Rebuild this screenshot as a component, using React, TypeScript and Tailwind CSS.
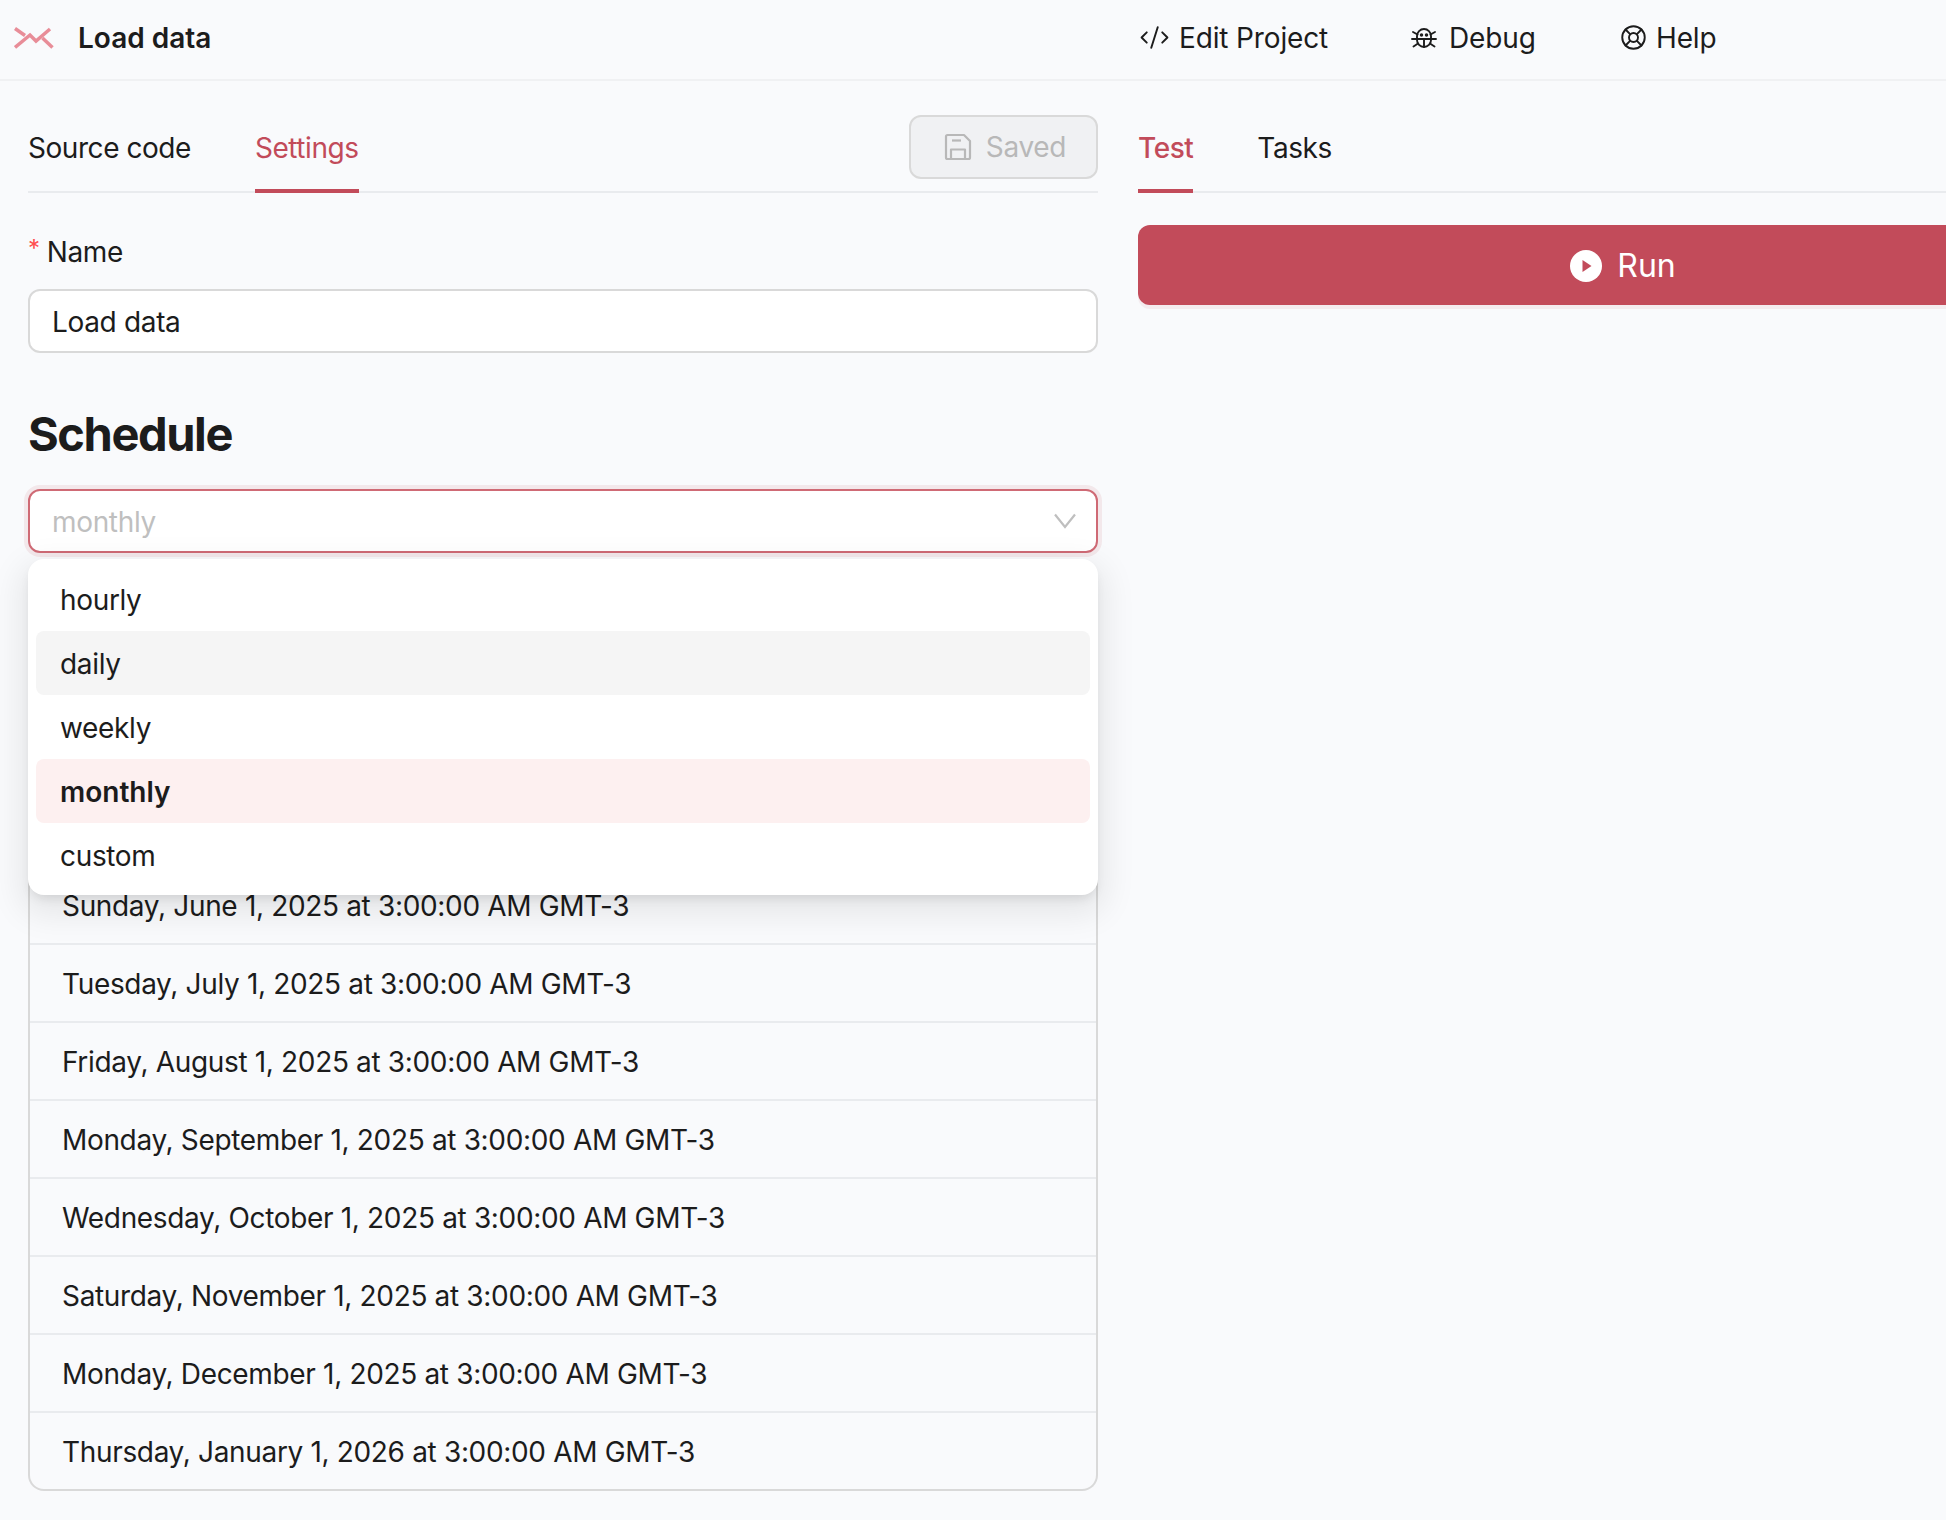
import { CodeXml, LifeBuoy } from "lucide-react"

const dates = [
  "Sunday, June 1, 2025 at 3:00:00 AM GMT-3",
  "Tuesday, July 1, 2025 at 3:00:00 AM GMT-3",
  "Friday, August 1, 2025 at 3:00:00 AM GMT-3",
  "Monday, September 1, 2025 at 3:00:00 AM GMT-3",
  "Wednesday, October 1, 2025 at 3:00:00 AM GMT-3",
  "Saturday, November 1, 2025 at 3:00:00 AM GMT-3",
  "Monday, December 1, 2025 at 3:00:00 AM GMT-3",
  "Thursday, January 1, 2026 at 3:00:00 AM GMT-3",
]

function Logo() {
  return (
    <svg width="40" height="22" viewBox="0 0 40 22" fill="none" stroke="#e88d98" strokeWidth="3.5">
      <path d="M1 1.5 L11 8.5" />
      <path d="M1 20.5 L16 8 L22 14 L36 2" />
      <path d="M28.5 11 L38.5 20.5" />
    </svg>
  )
}

function BugIcon() {
  return (
    <svg width="26" height="26" viewBox="0 0 26 26" fill="none" stroke="currentColor" strokeWidth="1.9" strokeLinecap="round">
      <path d="M6 11 a7 7 0 0 1 14 0 v4 a7 7 0 0 1 -14 0 z" />
      <path d="M6 14 H20 M13 14 V22" />
      <path d="M1 14 H6 M25 14 H20 M2 7 L6.5 9.5 M24 7 L19.5 9.5 M2.5 21.5 L7 18.5 M23.5 21.5 L19 18.5" />
      <circle cx="10.5" cy="10" r="0.8" fill="currentColor" />
      <circle cx="15.5" cy="10" r="0.8" fill="currentColor" />
    </svg>
  )
}

function SaveIcon() {
  return (
    <svg width="28" height="28" viewBox="0 0 28 28" fill="none" stroke="currentColor" strokeWidth="2.2" strokeLinejoin="round">
      <path d="M2 3.5 a1.5 1.5 0 0 1 1.5 -1.5 H20 L26 8 V24.5 a1.5 1.5 0 0 1 -1.5 1.5 H3.5 a1.5 1.5 0 0 1 -1.5 -1.5 z" />
      <path d="M8 7.5 H17" />
      <path d="M7 26 V16.5 H21 V26" />
    </svg>
  )
}

export default function App() {
  return (
    <div className="h-[1520px] w-[1946px] overflow-hidden bg-[#f9fafc] font-['Inter',sans-serif] text-[28px] tracking-[-0.012em] text-[#1c1c1c]">
      <div className="w-[2136px]">
        {/* Header */}
        <header className="flex h-[81px] items-center border-b-2 border-[#f0f1f3] pb-[4px]">
          <div className="ml-[14px] flex w-[1124px] items-center">
            <Logo />
            <span className="ml-[24px] font-semibold tracking-normal">Load data</span>
          </div>
          <nav className="flex items-center tracking-[-0.005em]">
            <a className="ml-[1px] flex w-[272px] items-center gap-[9px]">
              <CodeXml size={31} strokeWidth={1.5} />
              Edit Project
            </a>
            <a className="flex w-[209px] items-center gap-[12px]">
              <BugIcon />
              Debug
            </a>
            <a className="flex items-center gap-[9px]">
              <LifeBuoy size={27} strokeWidth={1.7} />
              Help
            </a>
          </nav>
        </header>

        <div className="grid grid-cols-[1070px_970px] gap-x-[40px] pl-[28px]">
          {/* Left column */}
          <div className="relative">
            <div className="flex h-[112px] items-end justify-between border-b-2 border-[#e9ebee]">
              <div className="flex gap-[64px] tracking-[-0.016em]">
                <button className="pb-[26px] leading-[34px]">Source code</button>
                <button className="-mb-[2px] border-b-4 border-[#c24b5a] pb-[24px] leading-[34px] text-[#c24b5a]">
                  Settings
                </button>
              </div>
              <button className="mb-[12px] flex h-[64px] w-[189px] items-center justify-center gap-[14px] rounded-[12px] border-2 border-[#d9d9d9] bg-[#f0f1f3] pl-[3px] text-[#b8b8b8]">
                <SaveIcon />
                Saved
              </button>
            </div>

            <div className="mt-[42px] flex items-start leading-[34px]">
              <span className="mt-[-3px] text-[24px] text-[#ff4d4f]">*</span>
              <span className="ml-[7px]">Name</span>
            </div>
            <div className="mt-[20px] flex h-[64px] items-center rounded-[12px] border-2 border-[#d9d9d9] bg-white px-[22px] pt-[1px]">
              Load data
            </div>

            <h2 className="mt-[52px] text-[47px] leading-[58px] font-bold tracking-[-0.03em]">Schedule</h2>

            <div className="mt-[26px] flex h-[64px] items-center justify-between rounded-[12px] border-2 border-[#cf6a75] bg-white pr-[20px] pl-[22px] text-[#bfbfbf] shadow-[0_0_0_4px_rgba(194,75,90,0.1)]">
              <span className="pt-[1px]">monthly</span>
              <svg width="22" height="16" viewBox="0 0 22 16" fill="none" stroke="#bfbfbf" strokeWidth="2.2">
                <path d="M1 1.5 L11 14 L21 1.5" />
              </svg>
            </div>

            {/* Dropdown */}
            <div className="absolute top-[478px] left-0 z-10 flex w-[1070px] flex-col rounded-[16px] bg-white p-[8px] shadow-[0_12px_32px_8px_rgba(0,0,0,0.08),0_6px_12px_-4px_rgba(0,0,0,0.12)]">
              <div className="flex h-[64px] items-center rounded-[8px] px-[24px] pt-[2px]">hourly</div>
              <div className="flex h-[64px] items-center rounded-[8px] bg-[#f5f5f5] px-[24px] pt-[2px]">daily</div>
              <div className="flex h-[64px] items-center rounded-[8px] px-[24px] pt-[2px]">weekly</div>
              <div className="flex h-[64px] items-center rounded-[8px] bg-[#fdf0f0] px-[24px] pt-[2px] font-semibold tracking-normal">monthly</div>
              <div className="flex h-[64px] items-center rounded-[8px] px-[24px] pt-[2px]">custom</div>
            </div>

            {/* Upcoming runs */}
            <div className="mt-[299px] rounded-b-[16px] border-2 border-t-0 border-[#d9d9d9]">
              {dates.map((d, i) => (
                <div
                  key={d}
                  className={
                    i === 0
                      ? "flex h-[93px] items-end border-b-2 border-[#e9ebee] px-[32px] pb-[16px]"
                      : i === dates.length - 1
                        ? "flex h-[76px] items-center px-[32px] pt-[2px]"
                        : "flex h-[78px] items-center border-b-2 border-[#e9ebee] px-[32px] pt-[2px]"
                  }
                >
                  {d}
                </div>
              ))}
            </div>
          </div>

          {/* Right column */}
          <div>
            <div className="flex h-[112px] items-end gap-[64px] border-b-2 border-[#e9ebee] tracking-[-0.016em]">
              <button className="-mb-[2px] border-b-4 border-[#c24b5a] pb-[24px] leading-[34px] font-medium text-[#c24b5a]">
                Test
              </button>
              <button className="pb-[26px] leading-[34px]">Tasks</button>
            </div>
            <button className="mt-[32px] flex h-[80px] w-full items-center justify-center gap-[15px] rounded-[12px] bg-[#c24b5a] pt-[2px] text-[32px] tracking-normal text-white shadow-[0_4px_0_rgba(194,75,90,0.08)]">
              <svg width="32" height="32" viewBox="0 0 32 32">
                <circle cx="16" cy="16" r="16" fill="#fff" />
                <path d="M12.5 10 L21.5 16 L12.5 22 Z" fill="#c24b5a" />
              </svg>
              Run
            </button>
          </div>
        </div>
      </div>
    </div>
  )
}
